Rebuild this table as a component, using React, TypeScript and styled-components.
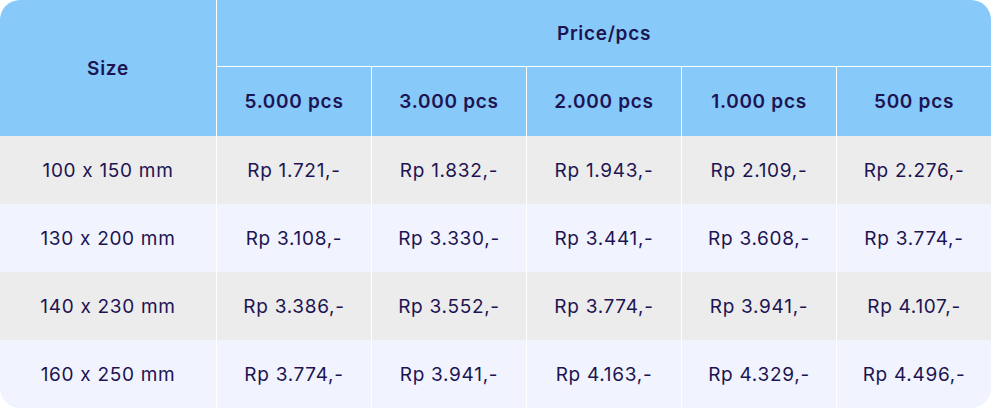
import styled, { createGlobalStyle } from "styled-components";

const GlobalStyle = createGlobalStyle`
	html, body {
		margin: 0;
		padding: 0;
		background: #ffffff;
	}
`;

const quantities = ["5.000 pcs", "3.000 pcs", "2.000 pcs", "1.000 pcs", "500 pcs"];

const rows = [
	{ size: "100 x 150 mm", prices: ["1.721", "1.832", "1.943", "2.109", "2.276"] },
	{ size: "130 x 200 mm", prices: ["3.108", "3.330", "3.441", "3.608", "3.774"] },
	{ size: "140 x 230 mm", prices: ["3.386", "3.552", "3.774", "3.941", "4.107"] },
	{ size: "160 x 250 mm", prices: ["3.774", "3.941", "4.163", "4.329", "4.496"] },
];

export default function App() {
	return (
		<>
			<GlobalStyle />
			<Table>
				<colgroup>
					<col style={{ width: 216 }} />
					{quantities.map((q) => (
						<col key={q} style={{ width: 155 }} />
					))}
				</colgroup>
				<thead>
					<tr>
						<HeadCell rowSpan={2}>Size</HeadCell>
						<TopCell colSpan={5}>Price/pcs</TopCell>
					</tr>
					<tr>
						{quantities.map((q) => (
							<QtyCell key={q}>{q}</QtyCell>
						))}
					</tr>
				</thead>
				<tbody>
					{rows.map((row, i) => (
						<BodyRow key={row.size} $alt={i % 2 === 1}>
							<SizeCell>{row.size}</SizeCell>
							{row.prices.map((p, j) => (
								<PriceCell key={j}>Rp {p},-</PriceCell>
							))}
						</BodyRow>
					))}
				</tbody>
			</Table>
		</>
	);
}

const Table = styled.table`
	width: 991px;
	height: 408px;
	table-layout: fixed;
	border-collapse: separate;
	border-spacing: 0;
	border-radius: 20px;
	overflow: hidden;
	font-family: Inter, "Noto Sans", sans-serif;
	font-feature-settings: "calt" 0;
	color: #1d1452;
	font-size: 19px;
	letter-spacing: 0.7px;

	& th,
	& td {
		padding: 0;
		text-align: center;
		vertical-align: middle;
	}
`;

const HeadCell = styled.th`
	background: #87c9f9;
	font-weight: 600;
	height: 136px;
`;

const TopCell = styled.th`
	background: #87c9f9;
	font-weight: 600;
	height: 66px;
	border-left: 1px solid #ffffff;
	border-bottom: 1px solid #ffffff;
`;

const QtyCell = styled.th`
	background: #87c9f9;
	font-weight: 600;
	height: 69px;
	border-left: 1px solid #ffffff;
`;

const BodyRow = styled.tr<{ $alt: boolean }>`
	background: ${(p) => (p.$alt ? "#f1f4fe" : "#ececec")};
	height: 68px;
`;

const SizeCell = styled.td`
	font-weight: 400;
`;

const PriceCell = styled.td`
	font-weight: 400;
	border-left: 1px solid #ffffff;
`;
